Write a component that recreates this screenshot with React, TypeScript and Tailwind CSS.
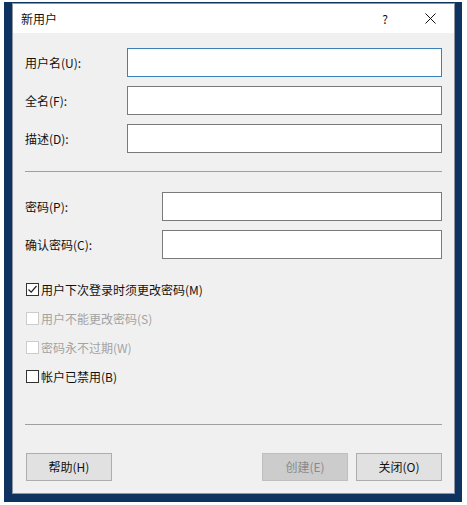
import React from 'react';

const font = { fontFamily: '"Noto Sans CJK SC", "Noto Sans", sans-serif' };

interface CheckProps {
  label: string;
  checked?: boolean;
  disabled?: boolean;
}

const CheckRow: React.FC<CheckProps> = ({ label, checked, disabled }) => (
  <div className="flex h-[29px] items-center">
    <div
      className={`flex h-[13px] w-[13px] items-center justify-center border bg-white ${
        disabled ? 'border-[#cccccc]' : 'border-[#333333]'
      }`}
    >
      {checked && (
        <svg width="11" height="11" viewBox="0 0 11 11">
          <path d="M1.5 5.5 L4.2 8.2 L9.5 2" fill="none" stroke="#222" strokeWidth="1.2" />
        </svg>
      )}
    </div>
    <span className={`ml-[2px] text-[12px] leading-none ${disabled ? 'text-[#a3a3a3]' : 'text-[#111]'}`}>
      {label}
    </span>
  </div>
);

const Field: React.FC<{ label: string; labelWidth: string; focused?: boolean }> = ({ label, labelWidth, focused }) => (
  <div className="flex h-[29px] items-center">
    <span className={`${labelWidth} shrink-0 text-[12px] text-[#111]`}>{label}</span>
    <div
      className={`h-[29px] flex-1 border bg-white ${focused ? 'border-[#3b80b8]' : 'border-[#7a7a7a]'}`}
    />
  </div>
);

const NuevoUsuario: React.FC = () => {
  return (
    <div className="h-[505px] w-[467px] overflow-hidden bg-white pl-[4px] pt-[2px]" style={font}>
      <div className="h-[500px] w-[458px] bg-[#0e3360] pl-[8px] pt-[1px]">
        <div className="flex h-[491px] w-[443px] flex-col border border-[#8c96a3] bg-[#f0f0f0]">
          {/* barra de titulo */}
          <div className="flex h-[29px] shrink-0 items-center bg-white pl-[8px]">
            <span className="text-[12px] text-[#111]">新用户</span>
            <span className="ml-auto w-[16px] text-center text-[12px] text-[#111]">?</span>
            <div className="ml-[29px] mr-[16px] flex h-[16px] w-[16px] items-center justify-center">
              <svg width="11" height="11" viewBox="0 0 11 11">
                <path d="M0.5 0.5 L10.5 10.5 M10.5 0.5 L0.5 10.5" stroke="#111" strokeWidth="1" />
              </svg>
            </div>
          </div>

          <div className="flex flex-1 flex-col px-[12px] pt-[15px]">
            <div className="flex flex-col gap-[9px]">
              <Field label="用户名(U):" labelWidth="w-[102px]" focused />
              <Field label="全名(F):" labelWidth="w-[102px]" />
              <Field label="描述(D):" labelWidth="w-[102px]" />
            </div>

            <div className="mt-[18px] h-px bg-[#a0a0a0]" />

            <div className="mt-[20px] flex flex-col gap-[9px]">
              <Field label="密码(P):" labelWidth="w-[137px]" />
              <Field label="确认密码(C):" labelWidth="w-[137px]" />
            </div>

            <div className="mt-[16px] flex flex-col pl-[1px]">
              <CheckRow label="用户下次登录时须更改密码(M)" checked />
              <CheckRow label="用户不能更改密码(S)" disabled />
              <CheckRow label="密码永不过期(W)" disabled />
              <CheckRow label="帐户已禁用(B)" />
            </div>

            <div className="mt-[33px] h-px bg-[#a0a0a0]" />

            <div className="mt-[28px] flex pl-[1px]">
              <button className="h-[28px] w-[86px] border border-[#adadad] bg-[#e1e1e1] text-[12px] text-[#111]">
                帮助(H)
              </button>
              <button
                disabled
                className="ml-auto h-[28px] w-[86px] border border-[#bfbfbf] bg-[#cccccc] text-[12px] text-[#8a8a8a]"
              >
                创建(E)
              </button>
              <button className="ml-[8px] h-[28px] w-[86px] border border-[#adadad] bg-[#e1e1e1] text-[12px] text-[#111]">
                关闭(O)
              </button>
            </div>
          </div>
        </div>
      </div>
    </div>
  );
};

export default NuevoUsuario;
